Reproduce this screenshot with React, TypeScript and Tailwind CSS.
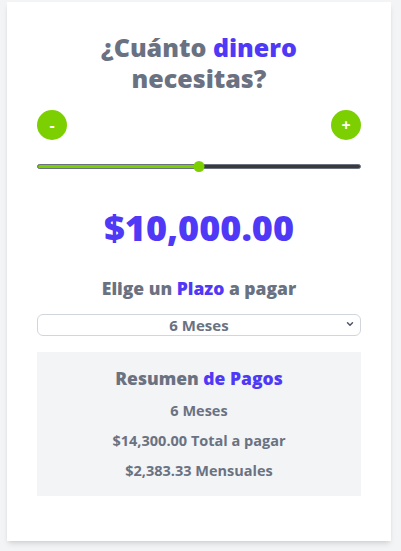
import { useState } from "react";
import { ChevronDown } from "lucide-react";

const MIN = 0;
const MAX = 20000;
const STEP = 1000;

const PLAZOS = [
  { meses: 3, interes: 0.15 },
  { meses: 6, interes: 0.43 },
  { meses: 12, interes: 0.8 },
];

const money = (n: number) =>
  "$" + n.toLocaleString("en-US", { minimumFractionDigits: 2, maximumFractionDigits: 2 });

export default function App() {
  const [cantidad, setCantidad] = useState(10000);
  const [meses, setMeses] = useState(6);

  const plazo = PLAZOS.find((p) => p.meses === meses) ?? PLAZOS[1];
  const total = cantidad * (1 + plazo.interes);
  const mensual = total / meses;
  const pct = ((cantidad - MIN) / (MAX - MIN)) * 100;

  const bajar = () => setCantidad((c) => Math.max(MIN, c - STEP));
  const subir = () => setCantidad((c) => Math.min(MAX, c + STEP));

  return (
    <div className="min-h-screen bg-gray-100 pt-[2px] font-['Open_Sans',sans-serif]">
      <div className="ml-[7px] w-[384px] bg-white px-[30px] pb-[45px] pt-[30px] shadow-md">
        <h1 className="mx-auto max-w-[260px] text-center text-[25px] leading-[31px] font-extrabold text-gray-500">
          ¿Cuánto <span className="text-indigo-600">dinero</span> necesitas?
        </h1>

        <div className="mt-4 flex items-center justify-between">
          <button
            type="button"
            onClick={bajar}
            className="flex h-[30px] w-[30px] items-center justify-center rounded-full bg-lime-500 text-base font-bold text-white"
          >
            -
          </button>
          <button
            type="button"
            onClick={subir}
            className="flex h-[30px] w-[30px] items-center justify-center rounded-full bg-lime-500 text-base font-bold text-white"
          >
            +
          </button>
        </div>

        <div className="relative mt-5 flex h-3 items-center">
          <div className="flex h-[5px] w-full overflow-hidden rounded-full border border-gray-500 bg-[#3a3a3a]">
            <div className="h-full bg-lime-500" style={{ width: `${pct}%` }} />
          </div>
          <div
            className="absolute top-[0.5px] h-[11px] w-[11px] -translate-x-1/2 rounded-full bg-lime-500"
            style={{ left: `${pct}%` }}
          />
        </div>

        <p className="mt-9 text-center text-4xl font-extrabold text-indigo-600">
          {money(cantidad)}
        </p>

        <h2 className="mt-[26px] text-center text-[17.5px] leading-7 font-extrabold text-gray-500">
          Elige un <span className="text-indigo-600">Plazo</span> a pagar
        </h2>

        <div className="relative mt-[11px]">
          <select
            value={meses}
            onChange={(e) => setMeses(Number(e.target.value))}
            className="h-[22px] w-full appearance-none rounded-md border border-gray-300 bg-white text-center text-[15px] leading-[20px] font-bold text-gray-500 [text-align-last:center]"
          >
            {PLAZOS.map((p) => (
              <option key={p.meses} value={p.meses}>
                {p.meses} Meses
              </option>
            ))}
          </select>
          <ChevronDown
            aria-hidden="true"
            strokeWidth={3.5}
            className="pointer-events-none absolute right-[6px] top-[6px] h-[10px] w-[10px] text-gray-600"
          />
        </div>

        <div className="mt-[15px] bg-gray-100 px-4 pb-[10px] pt-3 text-center text-gray-500">
          <h2 className="text-[17.5px] leading-7 font-extrabold">
            Resumen <span className="text-indigo-600">de Pagos</span>
          </h2>
          <p className="mt-1 text-[14.5px] leading-[30px] font-bold">{meses} Meses</p>
          <p className="text-[14.5px] leading-[30px] font-bold">{money(total)} Total a pagar</p>
          <p className="text-[14.5px] leading-[30px] font-bold">{money(mensual)} Mensuales</p>
        </div>
      </div>
    </div>
  );
}
